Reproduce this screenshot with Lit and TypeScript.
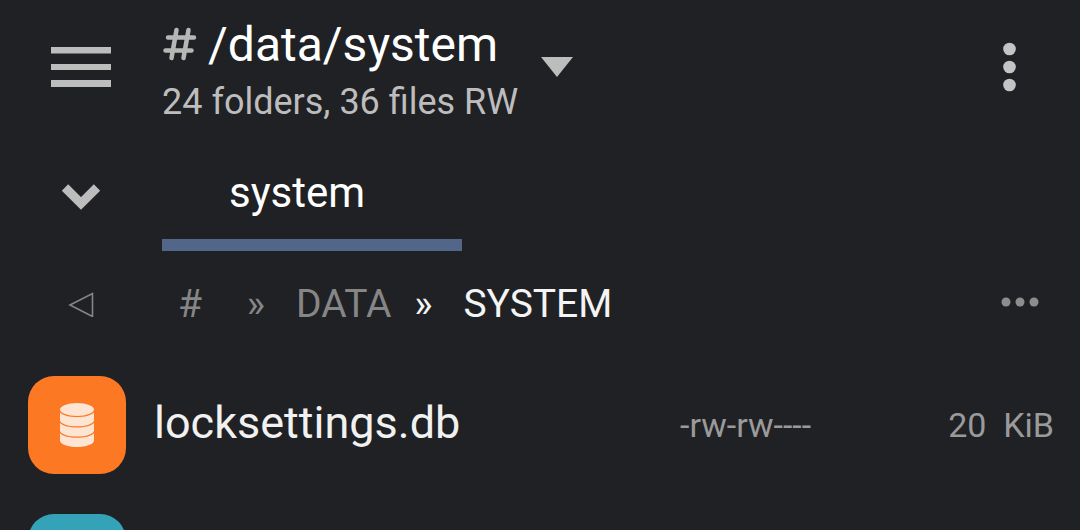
import { LitElement, html, css, svg } from "lit";
import { customElement, property } from "lit/decorators.js";

interface FileEntry {
  kind: "database" | "document";
  name: string;
  mode: string;
  size: string;
}

const files: FileEntry[] = [
  { kind: "database", name: "locksettings.db", mode: "-rw-rw----", size: "20  KiB" },
  { kind: "document", name: "", mode: "", size: "" },
];

const databaseGlyph = svg`
  <path d="M0 6.5C0 3 7.6 0 17 0s17 3 17 6.500S26.400 13 17 13 0 10 0 6.500z"/>
  <path d="M0 9.500C3 12.600 9.500 14.100 17 14.100S31 12.600 34 9.500V17.500C33 21 26 23.300 17 23.300S1 21 0 17.500z"/>
  <path d="M0 20C3 23 9.500 24.500 17 24.500S31 23 34 20V27.800C33 31.300 26 33.600 17 33.600S1 31.300 0 27.800z"/>
  <path d="M0 30.300C3 33.300 9.500 34.800 17 34.800S31 33.300 34 30.300V38C33 41.500 26 44 17 44S1 41.500 0 38z"/>`;

@customElement("file-row")
export class FileRow extends LitElement {
  @property({ attribute: false }) entry!: FileEntry;

  static styles = css`
    :host {
      display: flex;
      align-items: center;
      height: 138px;
      padding: 0 26px 0 28px;
      box-sizing: border-box;
      white-space: pre;
    }
    .tile {
      flex: none;
      display: grid;
      place-items: center;
      width: 98px;
      height: 98px;
      border-radius: 26px;
      margin-right: 28px;
    }
    .database {
      background: #fc7823;
    }
    .document {
      background: #35a3b7;
    }
    .tile svg {
      fill: #fee4d2;
    }
    .name {
      flex: 1;
      padding-bottom: 4px;
      color: #f1f1f1;
      font-size: 45px;
      line-height: 56px;
    }
    .mode,
    .size {
      color: #9a9a9b;
      font-size: 34px;
      line-height: 44px;
    }
    .mode {
      width: 240px;
    }
    .size {
      width: 134px;
      text-align: right;
    }
  `;

  render() {
    const { kind, name, mode, size } = this.entry;
    return html`
      <span class="tile ${kind}">
        ${kind === "database"
          ? html`<svg width="34" height="44" viewBox="0 0 34 44" aria-hidden="true">${databaseGlyph}</svg>`
          : null}
      </span>
      <span class="name">${name}</span>
      <span class="mode">${mode}</span>
      <span class="size">${size}</span>
    `;
  }
}

@customElement("app-root")
export class AppRoot extends LitElement {
  static styles = css`
    :host {
      display: block;
      height: 100vh;
      overflow: hidden;
      background: #202124;
      color: #fff;
      font-family: Roboto, "Liberation Sans", sans-serif;
    }
    button {
      appearance: none;
      box-sizing: border-box;
      border: 0;
      padding: 0;
      background: none;
      color: inherit;
      font: inherit;
      cursor: pointer;
    }
    a {
      color: inherit;
      text-decoration: none;
    }
    svg {
      display: block;
    }
    .bar,
    .tabs,
    .crumbs {
      display: flex;
      align-items: center;
    }
    .side {
      flex: none;
      display: grid;
      place-items: center;
      width: 162px;
      height: 80px;
    }
    .bar {
      height: 134px;
    }
    .path {
      display: flex;
      align-items: center;
      gap: 22px;
      text-align: left;
    }
    .title {
      display: flex;
      align-items: center;
      gap: 10px;
      font-size: 48px;
      line-height: 70px;
    }
    .summary {
      display: block;
      color: #bdbdbe;
      font-size: 36px;
      line-height: 44px;
    }
    .more {
      display: grid;
      place-items: center;
      width: 80px;
      height: 80px;
      margin: 0 30px 0 auto;
    }
    .tabs {
      height: 117px;
    }
    .tabs .side {
      padding-top: 8px;
    }
    .tab {
      width: 300px;
      height: 117px;
      padding: 12px 30px 0 0;
      border-bottom: 12px solid #516689;
      font-size: 42px;
      line-height: 48px;
    }
    .crumbs {
      height: 105px;
      color: #868687;
      font-size: 39px;
      line-height: 48px;
    }
    .trail {
      display: flex;
    }
    .home {
      box-sizing: border-box;
      width: 62px;
      padding-left: 16px;
    }
    .sep {
      box-sizing: border-box;
      width: 72px;
      padding-right: 8px;
      text-align: center;
    }
    .current {
      color: #f4f4f4;
    }
    .crumbs .more {
      margin-right: 20px;
      padding-bottom: 4px;
    }
  `;

  render() {
    return html`
      <header class="bar">
        <button class="side" aria-label="Menu">
          <svg width="60" height="40" fill="#bdbdbe">
            <path d="M0 0h60v6.500H0zM0 17h60v6H0zM0 33h60v7H0z" />
          </svg>
        </button>
        <button class="path">
          <span>
            <span class="title">
              <svg width="36" height="38" viewBox="0 0 36 38" fill="none" stroke="#b6b6b7" stroke-width="4.500" stroke-linecap="round">
                <path d="M14.500 4 9.500 32M26.500 4 21.500 32M6 11.500h26M3.500 24.500h26" />
              </svg>
              <span>/data/system</span>
            </span>
            <span class="summary">24 folders, 36 files RW</span>
          </span>
          <svg width="34" height="20" fill="#bdbdbe"><path d="M1 0h32L17 20z" /></svg>
        </button>
        <button class="more" aria-label="More options">
          <svg width="14" height="50" fill="#c4c4c5">
            <circle cx="6.500" cy="7" r="6.300" />
            <circle cx="6.500" cy="25" r="6.300" />
            <circle cx="6.500" cy="43" r="6.300" />
          </svg>
        </button>
      </header>
      <nav class="tabs">
        <button class="side" aria-label="Show tabs">
          <svg width="40" height="28" fill="none" stroke="#bdbdbe" stroke-width="9">
            <path d="M4 4.500 20 20.500 36 4.500" />
          </svg>
        </button>
        <button class="tab">system</button>
      </nav>
      <nav class="crumbs">
        <button class="side" aria-label="Back">
          <svg width="26" height="26" fill="none" stroke="#868687" stroke-width="1.600">
            <path d="M2 14 24.500 2.500v23z" />
          </svg>
        </button>
        <span class="trail">
          <a class="home" href="#root">#</a>
          <span class="sep">»</span>
          <a href="#data">DATA</a>
          <span class="sep current">»</span>
          <a class="current" href="#system">SYSTEM</a>
        </span>
        <button class="more" aria-label="Path options">
          <svg width="38" height="10" fill="#8d8d8e">
            <circle cx="5" cy="5" r="4.500" />
            <circle cx="19" cy="5" r="4.500" />
            <circle cx="33" cy="5" r="4.500" />
          </svg>
        </button>
      </nav>
      <main>${files.map((f) => html`<file-row .entry=${f}></file-row>`)}</main>
    `;
  }
}
